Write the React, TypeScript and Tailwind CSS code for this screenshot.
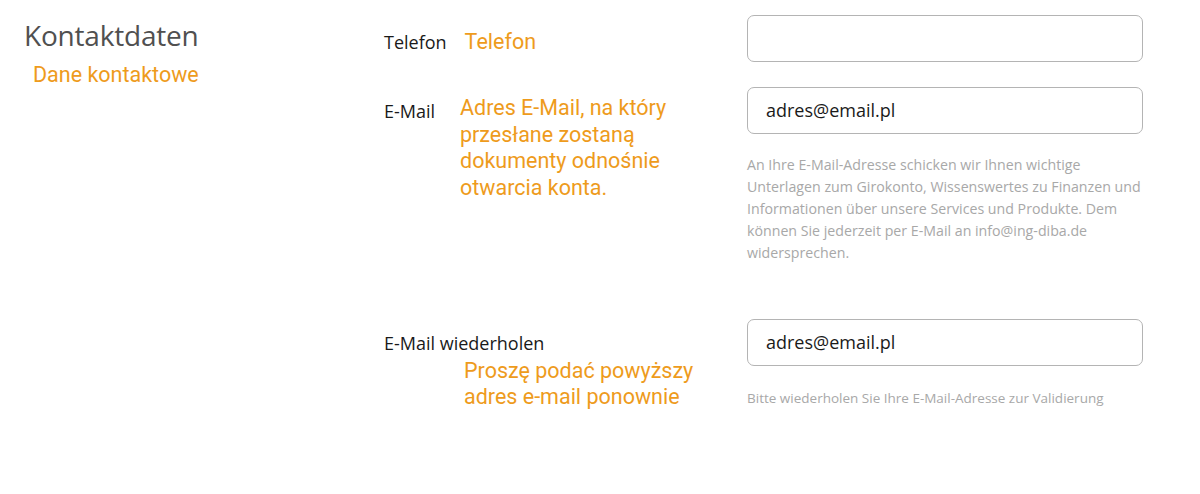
function Field({ value }: { value?: string }) {
  return (
    <div className="h-[47px] w-[396px] rounded-[7px] border border-[#b4b4b4] bg-white px-[18px] flex items-center text-[18px] text-[#1a1a1a] font-['Open_Sans',sans-serif]">
      {value}
    </div>
  );
}

const helpLines = [
  "An Ihre E-Mail-Adresse schicken wir Ihnen wichtige",
  "Unterlagen zum Girokonto, Wissenswertes zu Finanzen und",
  "Informationen über unsere Services und Produkte. Dem",
  "können Sie jederzeit per E-Mail an info@ing-diba.de",
  "widersprechen.",
];

export default function App() {
  return (
    <div className="w-[1200px] h-[494px] bg-white flex font-['Open_Sans',sans-serif]">
      <div className="w-[384px] shrink-0 pl-6 pt-[17px]">
        <h1 className="text-[28px] leading-[36px] text-[#505050] font-normal tracking-[-0.2px]">Kontaktdaten</h1>
        <p className="ml-[9px] mt-[8px] text-[21.5px] leading-[28px] text-[#ee9b1c] font-[Roboto,sans-serif]">Dane kontaktowe</p>
      </div>

      <div className="flex flex-col pt-[15px]">
        {/* Telefon */}
        <div className="flex">
          <div className="w-[363px] flex items-center gap-[18px] self-start mt-[13px]">
            <span className="text-[18px] leading-[24px] text-[#1a1a1a]">Telefon</span>
            <span className="text-[21.5px] leading-[28px] text-[#ee9b1c] font-[Roboto,sans-serif]">Telefon</span>
          </div>
          <Field />
        </div>

        {/* E-Mail */}
        <div className="flex mt-[25px]">
          <div className="w-[363px] flex items-start">
            <span className="w-[76px] mt-[12px] text-[18px] leading-[24px] text-[#1a1a1a]">E-Mail</span>
            <p className="w-[235px] mt-[8px] text-[21.5px] leading-[26.5px] text-[#ee9b1c] font-[Roboto,sans-serif]">
              Adres E-Mail, na który przesłane zostaną dokumenty odnośnie otwarcia konta.
            </p>
          </div>
          <div>
            <Field value="adres@email.pl" />
            <p className="mt-[20px] w-[420px] text-[14.2px] leading-[22px] text-[#a8a8a8]">
              {helpLines.map((l) => (
                <span key={l} className="block whitespace-nowrap">{l}</span>
              ))}
            </p>
          </div>
        </div>

        {/* E-Mail wiederholen */}
        <div className="flex mt-[55px]">
          <div className="w-[363px] pt-[12px]">
            <span className="block text-[18px] leading-[24px] text-[#1a1a1a]">E-Mail wiederholen</span>
            <p className="ml-[80px] mt-[3px] text-[21.5px] leading-[26px] text-[#ee9b1c] font-[Roboto,sans-serif]">
              Proszę podać powyższy
              <br />
              adres e-mail ponownie
            </p>
          </div>
          <div>
            <Field value="adres@email.pl" />
            <p className="mt-[21px] text-[13.5px] leading-[22px] text-[#a8a8a8]">
              Bitte wiederholen Sie Ihre E-Mail-Adresse zur Validierung
            </p>
          </div>
        </div>
      </div>
    </div>
  );
}
